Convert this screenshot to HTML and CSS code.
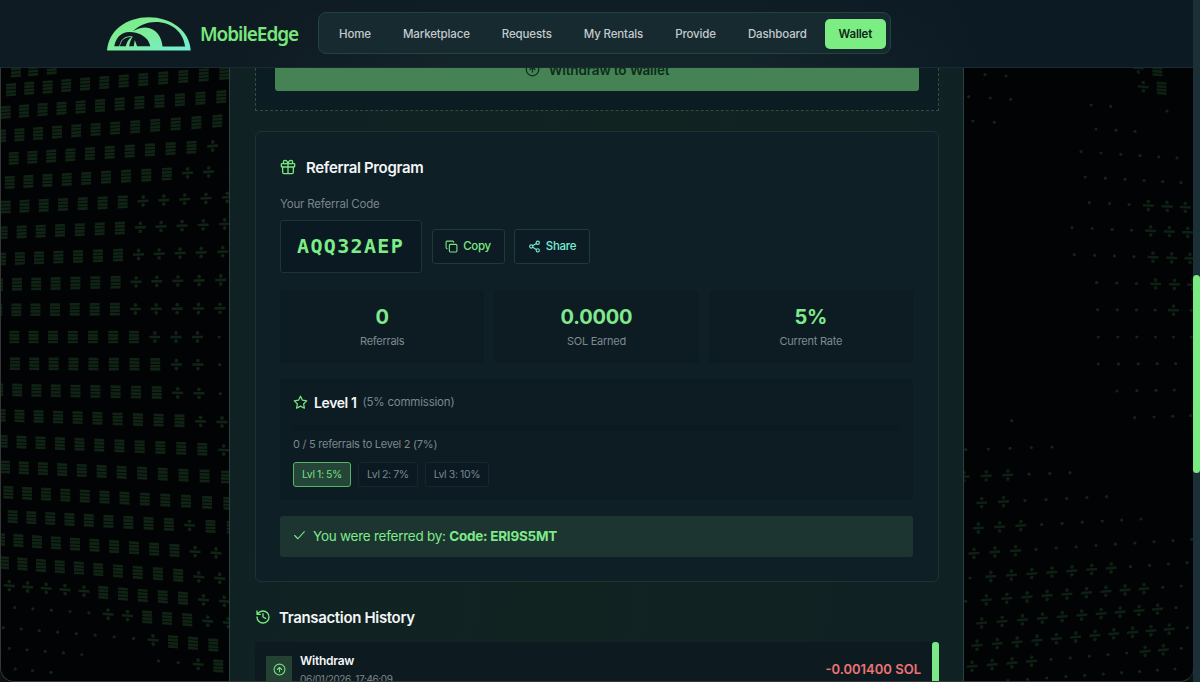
FILE: index.html
```html
<!DOCTYPE html>
<html lang="en">
<head>
<meta charset="utf-8">
<title>MobileEdge - Wallet</title>
<link rel="stylesheet" href="styles.css">
</head>
<body>
<svg class="field" viewBox="0 0 1200 682" aria-hidden="true"></svg>
<header class="topbar">
  <a class="brand">
    <svg class="brand-mark" viewBox="50 51 254 102">
      <defs><linearGradient id="g" x1="0" y1="0" x2="1" y2="1"><stop offset="0" stop-color="#7aee7f"/><stop offset=".55" stop-color="#7eeca0"/><stop offset="1" stop-color="#6ff0d8"/></linearGradient></defs>
      <path fill="url(#g)" d="M50 152C54 92 108 51 176 51S300 92 303 152Z"/>
      <path fill="#0e1b22" d="M128 94C150 74 172 66 197 66 245 66 281 96 286 140H218C215 108 197 83 166 82 153 82 140 87 128 94Z"/>
      <path fill="#0e1b22" d="M72 139C77 112 94 96 117 96 150 96 176 113 181 139H141L134 120 131 139H117C119 127 122 117 128 110 106 105 92 117 87 139Z"/>
      <path fill="#0e1b22" d="M89 139C93 121 103 110 124 111 114 119 109 128 107 139Z"/>
    </svg>
    <span class="brand-name">MobileEdge</span>
  </a>
  <nav class="menu">
    <a>Home</a><a>Marketplace</a><a>Requests</a><a>My Rentals</a><a>Provide</a><a>Dashboard</a><a class="active">Wallet</a>
  </nav>
</header>
<main class="panel">
  <section class="payout">
    <button class="payout-button"><svg class="icon" viewBox="0 0 24 24"><circle cx="12" cy="12" r="10"/><path d="m16 12-4-4-4 4M12 16V8"/></svg>Withdraw to Wallet</button>
  </section>
  <section class="referral">
    <h2><svg class="icon" viewBox="0 0 24 24"><rect x="2" y="7" width="20" height="5" rx="1"/><path d="M12 7v15M4 12v8a2 2 0 0 0 2 2h12a2 2 0 0 0 2-2v-8M7.500 7a2.500 2.500 0 0 1 0-5C11 2 12 7 12 7s1-5 4.500-5a2.500 2.500 0 0 1 0 5"/></svg>Referral Program</h2>
    <p class="label">Your Referral Code</p>
    <div class="code-row">
      <code>AQQ32AEP</code>
      <button><svg class="icon" viewBox="0 0 24 24"><rect x="8" y="8" width="14" height="14" rx="2"/><path d="M4 16c-1.100 0-2-.9-2-2V4c0-1.100.9-2 2-2h10c1.100 0 2 .9 2 2"/></svg>Copy</button>
      <button class="share"><svg class="icon" viewBox="0 0 24 24"><circle cx="18" cy="5" r="3"/><circle cx="6" cy="12" r="3"/><circle cx="18" cy="19" r="3"/><path d="m8.600 13.500 6.800 4M15.400 6.500l-6.800 4"/></svg>Share</button>
    </div>
    <div class="stats">
      <div><strong>0</strong><span>Referrals</span></div>
      <div><strong>0.0000</strong><span>SOL Earned</span></div>
      <div><strong>5%</strong><span>Current Rate</span></div>
    </div>
    <div class="level">
      <div class="level-head"><svg class="icon" viewBox="0 0 24 24"><path d="m12 2 3.100 6.300 6.900 1-5 4.900 1.200 6.900L12 17.800l-6.200 3.300L7 14.200 2 9.300l6.900-1Z"/></svg><b>Level 1</b><span>(5% commission)</span></div>
      <div class="bar"></div>
      <p>0 / 5 referrals to Level 2 (7%)</p>
      <div class="tiers"><span class="on">Lvl 1: 5%</span><span>Lvl 2: 7%</span><span>Lvl 3: 10%</span></div>
    </div>
    <div class="referred"><svg class="icon" viewBox="0 0 24 24"><path d="M21 5 9 18l-6-6"/></svg><span>You were referred by: <b>Code: ERI9S5MT</b></span></div>
  </section>
  <section class="history">
    <h2><svg class="icon" viewBox="0 0 24 24"><path d="M3 12a9 9 0 1 0 9-9 9.700 9.700 0 0 0-6.700 2.700L3 8M3 3v5h5M12 7v5l4 2"/></svg>Transaction History</h2>
    <div class="history-list">
      <div class="tx">
        <span class="tx-icon"><svg class="icon" viewBox="0 0 24 24"><circle cx="12" cy="12" r="10"/><path d="m16 12-4-4-4 4M12 16V8"/></svg></span>
        <div class="tx-info"><b>Withdraw</b><span>06/01/2026, 17:46:09</span></div>
        <span class="amount">-0.001400 SOL</span>
      </div>
      <i class="list-thumb"></i>
    </div>
  </section>
</main>
<div class="frame"></div>
<div class="scroll"><i></i></div>
<script src="field.js"></script>
</body>
</html>
```
FILE: styles.css
```css
* { box-sizing: border-box; }
body { margin: 0; width: 1200px; height: 682px; overflow: hidden; background: #020304; color: #f2f5f6; font-family: Inter, "Liberation Sans", sans-serif; font-size: 12px; position: relative; }
h2, p { margin: 0; }
button { font: inherit; letter-spacing: inherit; }
.field { position: absolute; inset: 0; width: 1200px; height: 682px; }
.icon { fill: none; stroke: currentColor; stroke-width: 2; stroke-linecap: round; stroke-linejoin: round; flex: none; }
.topbar { position: relative; display: flex; align-items: center; height: 68px; padding: 0 0 1px 107px; background: linear-gradient(90deg, #0e1b22 0, #0e1b22 20%, transparent 38%, transparent 62%, #0c1a24 82%), linear-gradient(#0e1c24, #14252a); border-bottom: 1px solid #192b30; }
.brand { display: flex; align-items: center; width: 211px; }
.brand-mark { width: 84px; height: 34px; margin-top: 1px; }
.brand-name { margin: 2px 0 0 9px; font: 600 19px "Noto Sans", sans-serif; letter-spacing: -1.050px; color: #79e77e; }
.menu { display: flex; align-items: center; width: 573px; height: 42px; padding: 1px 4px 0 6px; border: 1px solid #21443c; border-radius: 8px; background: #172a30; font-size: 11.500px; font-weight: 500; letter-spacing: -.14px; color: #c3cace; }
.menu a { height: 30px; line-height: 30px; padding: 0 14px; margin-right: 4px; white-space: nowrap; }
.menu .active { margin: 0 0 0 auto; border-radius: 5px; background: #7bed83; color: #102619; font-weight: 600; letter-spacing: -.2px; }
.panel { position: relative; width: 735px; height: 614px; margin-left: 229px; padding: 0 24px 0 25px; overflow: hidden; border: solid #24453d; border-width: 0 1px; background: linear-gradient(100deg, #11232100, #112321 50%, #11232100), #102124; }
.payout { display: flow-root; height: 43px; padding: 0 19px; border: 1px dashed #2b503c; border-top: 0; background: #0c1c23; }
.payout-button { display: flex; align-items: center; justify-content: center; gap: 9px; width: 100%; height: 43px; margin-top: -20px; padding: 0; border: 0; border-radius: 3px; background: #458354; color: #0c2c1c; font-size: 13.500px; font-weight: 600; letter-spacing: -.15px; }
.payout-button .icon { width: 15px; }
.referral { height: 451px; margin-top: 20px; padding: 26px 25px 0 24px; border: 1px solid #1c3431; border-radius: 6px; background: #0f1f26; }
h2 { display: flex; align-items: center; gap: 10px; height: 18px; font-size: 15px; font-weight: 600; letter-spacing: -.34px; }
h2 .icon { width: 16px; color: #79e880; }
.label { margin-top: 21px; line-height: 15px; font-size: 11.500px; letter-spacing: -.2px; color: #79858b; }
.code-row { display: flex; align-items: center; gap: 9.500px; margin-top: 8px; }
code { width: 142px; height: 53px; padding-left: 16px; border: 1px solid #1d3535; border-radius: 3px; background: #0b1922; font: bold 20px/50px "DejaVu Sans Mono", monospace; letter-spacing: 1.350px; color: #7ded87; }
.code-row button { display: flex; align-items: center; justify-content: center; gap: 5px; width: 73px; height: 35px; margin-top: -1px; padding: 0; border: 1px solid #1d3b38; border-radius: 3px; background: #0d1b24; color: #7ae984; font-size: 11.500px; font-weight: 500; letter-spacing: -.3px; }
.code-row .share { width: 76px; color: #78edda; }
.code-row .icon { width: 13px; }
.stats { display: grid; grid-template-columns: repeat(3, 1fr); gap: 10px; margin-top: 17px; }
.stats div { display: flex; flex-direction: column; align-items: center; height: 73px; padding-top: 14px; border-radius: 4px; background: #0d1c23; }
.stats strong { font-size: 20px; line-height: 26px; letter-spacing: -.2px; color: #81e98d; }
.stats span { margin-top: 4px; line-height: 15px; font-size: 11px; letter-spacing: -.25px; color: #7e898f; }
.level { height: 121px; margin-top: 16px; padding: 15px 13px; border-radius: 4px; background: #0d1b23; }
.level-head { display: flex; align-items: center; height: 16px; font-size: 14px; letter-spacing: -.4px; }
.level-head .icon { width: 15px; margin-right: 6px; color: #79e77f; }
.level-head b { font-weight: 600; }
.level-head span { margin-left: 6px; font-size: 11.500px; letter-spacing: -.2px; color: #7b878d; }
.bar { height: 6px; margin-top: 15px; border-radius: 3px; background: #0c1921; }
.level p { margin-top: 6px; line-height: 14px; font-size: 11px; letter-spacing: -.26px; color: #7b878d; }
.tiers { display: flex; gap: 7px; margin-top: 11px; }
.tiers span { height: 25px; padding: 0 8px; line-height: 23px; border: 1px solid #142730; border-radius: 3px; background: #0b1922; font-size: 10.500px; letter-spacing: -.4px; color: #7b868c; }
.tiers .on { border-color: #56b566; background: #244537; color: #78df84; }
.referred { display: flex; align-items: center; gap: 7px; height: 41px; margin-top: 16px; padding: 0 0 2px 13px; border-radius: 3px; background: #1d3531; font-size: 13.500px; letter-spacing: -.25px; color: #7dea89; }
.referred .icon { width: 13px; }
.referred b { font-weight: 700; }
.history h2 { gap: 8px; margin-top: 26px; }
.history-list { display: flex; justify-content: space-between; height: 41px; margin-top: 16px; padding: 0; background: #0d1b21; }
.tx { display: flex; width: 666px; padding: 14px 0 0 11px; }
.tx-icon { display: grid; place-items: center; width: 26px; height: 27px; background: #234234; color: #78df84; }
.tx-icon .icon { width: 13px; }
.tx-info { display: flex; flex-direction: column; margin: -2px 0 0 8px; }
.tx-info b { font-weight: 600; line-height: 14px; letter-spacing: -.25px; }
.tx-info span { margin-top: 4px; font-size: 10px; line-height: 14px; letter-spacing: -.4px; color: #7c878b; }
.amount { margin-left: auto; padding-top: 5px; font-size: 13px; font-weight: 600; color: #ee7474; }
.list-thumb { width: 7px; border-radius: 3px 3px 0 0; background: #7ae887; }
.frame { position: absolute; left: 0; top: 68px; width: 1194px; height: 614px; border: 1px solid #343638; border-top: 0; border-right-color: #182427; border-radius: 0 0 14px 14px; box-shadow: 0 14px #0b1012; clip-path: inset(0); }
.scroll { position: absolute; top: 0; right: 0; width: 7px; height: 682px; padding-top: 275px; background: #1b3036; }
.scroll i { display: block; height: 198px; border-radius: 4px; background: #7aeb83; }
```
FILE: field.js
```js
// Rows of the dot-matrix globe: x0, y0, x1, y1, glyphs (one per column).
const left = [
  [48, 212, 155, 204, "==="], [33, 269, 673, 220, "============"],
  [17, 337, 664, 290, "============"], [3, 408, 652, 363, "============"],
  [41, 475, 638, 438, "==========+"], [29, 547, 690, 512, "=========++."],
  [17, 621, 682, 592, "=======+++++"], [8, 698, 674, 672, "=======+++++"],
  [3, 777, 668, 755, "=======+++++"], [-6, 854, 662, 840, "=======+++++"],
  [-8, 930, 660, 925, "=======+++++"], [43, 1011, 658, 1011, "=======+++."],
  [45, 1091, 659, 1094, "========++."], [-5, 1169, 661, 1181, "=========++."],
  [2, 1246, 666, 1266, "==========++"], [8, 1324, 671, 1350, "===========+"],
  [15, 1401, 678, 1431, "============"], [25, 1477, 685, 1510, "============"],
  [38, 1550, 695, 1582, "=========+=="], [0, 1618, 648, 1659, "==========++"],
  [12, 1688, 659, 1735, "==========++"], [28, 1757, 673, 1804, "+++++=====++"],
  [44, 1823, 685, 1868, ".....++===++"], [10, 1883, 640, 1935, "........+==="],
  [28, 1945, 655, 1998, ".....   ..+="], [46, 2007, 153, 2017, "..."]
];
const right = [
  [565, 204, 622, 209, "+="], [105, 224, 168, 228, ".."], [580, 260, 635, 265, "+="],
  [56, 290, 182, 298, "..."], [424, 315, 482, 319, ".."], [651, 333, 651, 333, "."],
  [68, 363, 133, 367, ".."], [438, 387, 555, 394, "..."], [393, 455, 681, 474, "......"],
  [406, 531, 693, 548, "......"], [418, 608, 706, 622, "...+++"],
  [366, 683, 713, 697, "....+++"], [373, 764, 720, 775, "....+++"],
  [440, 848, 728, 854, "...+++"], [443, 929, 724, 931, "....+."],
  [445, 1011, 724, 1011, "......"], [445, 1092, 677, 1091, "....."],
  [501, 1173, 673, 1170, "...."], [185, 1262, 185, 1262, "."], [554, 1253, 722, 1247, "...."],
  [47, 1349, 306, 1341, "....."], [42, 1430, 360, 1418, "+++..."],
  [95, 1508, 470, 1490, "++....."], [85, 1584, 573, 1557, "+++......"],
  [72, 1660, 725, 1618, "+++........."], [60, 1734, 711, 1688, ".+++++++...."],
  [47, 1804, 694, 1758, ".+++++++++.."], [95, 1869, 678, 1823, "++++++++++."],
  [81, 1936, 712, 1883, "+++++++++++."], [66, 1999, 694, 1945, "++++.....++."],
  [174, 2042, 675, 2007, ".........."]
];
let out = "";
function draw(rows, dx, bend, color) {
  for (const [x0, y0, x1, y1, glyphs] of rows) {
    const last = glyphs.length - 1;
    const slope = x1 === x0 ? 0 : (y1 - y0) / (x1 - x0);
    const angle = Math.atan(slope) * 57.3;
    [...glyphs].forEach((g, i) => {
      const t = last ? i / last : 0;
      const e = t + bend * t * (t - 1);
      const x = dx + (x0 + (x1 - x0) * e) / 3;
      const y = (y0 + (y1 - y0) * e) / 3;
      const at = `transform="translate(${x.toFixed(1)} ${y.toFixed(1)}) rotate(${angle.toFixed(1)}) skewX(${(angle * 1.2).toFixed(1)})"`;
      if (g === "=") out += `<path ${at} stroke="${color}" stroke-width="2.700" d="M-5-5h10M-5-1.700h10M-5 1.700h10M-5 5h10"/>`;
      if (g === "+") out += `<g ${at} fill="${color}"><path d="M-5.500-1.300h11v2.600h-11z"/><circle cy="-4" r="1.900"/><circle cy="4" r="1.900"/></g>`;
      if (g === ".") out += `<circle cx="${x.toFixed(1)}" cy="${y.toFixed(1)}" r="1.600" fill="#152319"/>`;
    });
  }
}
draw(left, 0, 0.07, "#102315");
draw(right, 950, -0.06, "#0e1f13");
document.querySelector(".field").innerHTML = out;
```
